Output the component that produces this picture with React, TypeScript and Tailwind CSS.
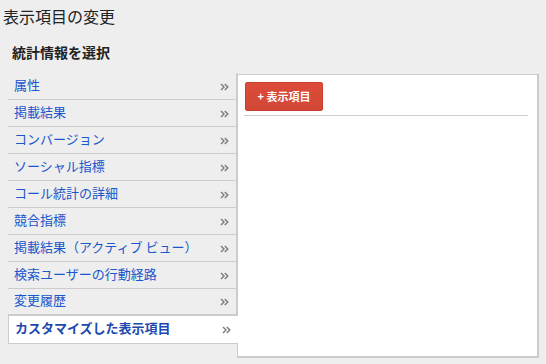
import React from "react";

const items = [
  "属性",
  "掲載結果",
  "コンバージョン",
  "ソーシャル指標",
  "コール統計の詳細",
  "競合指標",
  "掲載結果（アクティブ ビュー）",
  "検索ユーザーの行動経路",
  "変更履歴",
];

const Chevrons = () => (
  <svg width="9" height="8" viewBox="0 0 9 8" className="shrink-0 mt-px">
    <path d="M1 1l3 3-3 3M4.8 1l3 3-3 3" fill="none" stroke="#7a7a7a" strokeWidth="1.4" />
  </svg>
);

const App = () => {
  return (
    <div
      className="w-[546px] h-[364px] bg-[#eeeeee] overflow-hidden text-[#222]"
      style={{ fontFamily: '"Noto Sans CJK JP", "Noto Sans", sans-serif' }}
    >
      <h1 className="pl-[3px] pt-[7px] text-[16px] leading-[18px] font-normal">表示項目の変更</h1>
      <h2 className="pl-[12px] mt-[19px] text-[14px] leading-[16px] font-bold">統計情報を選択</h2>

      <div className="flex items-start mt-[13px] pl-[8px]">
        {/* left menu */}
        <div className="w-[229px] shrink-0">
          <div className="border-r border-[#cccccc]">
            {items.map((label, i) => (
              <div
                key={label}
                className={`h-[27px] flex items-center justify-between pl-[6px] pr-[7px] border-b border-[#cccccc] ${
                  i === items.length - 1 ? "border-b-2" : ""
                }`}
              >
                <span className="pb-[4px] text-[13px] leading-none text-[#1a56cc]">{label}</span>
                <Chevrons />
              </div>
            ))}
          </div>
          <div className="relative z-10 w-[230px] h-[28px] bg-white border-l border-b border-[#cccccc] flex items-center justify-between pl-[6px] pr-[7px]">
            <span className="pb-[4px] text-[13px] leading-none font-bold text-[#1c48b0]">カスタマイズした表示項目</span>
            <Chevrons />
          </div>
        </div>

        {/* right panel */}
        <div className="mt-px w-[302px] h-[284px] shrink-0 bg-white border border-[#cccccc] border-r-2 border-b-2 pt-[7px] pl-[6px] pr-[9px]">
          <button className="ml-px h-[29px] w-[78px] rounded-[2px] bg-gradient-to-b from-[#dd4b39] to-[#d14836] border border-[#c8412f] text-white text-[11px] font-bold leading-none">
            + 表示項目
          </button>
          <div className="mt-[4px] border-t border-[#cccccc]" />
        </div>
      </div>
    </div>
  );
};

export default App;
